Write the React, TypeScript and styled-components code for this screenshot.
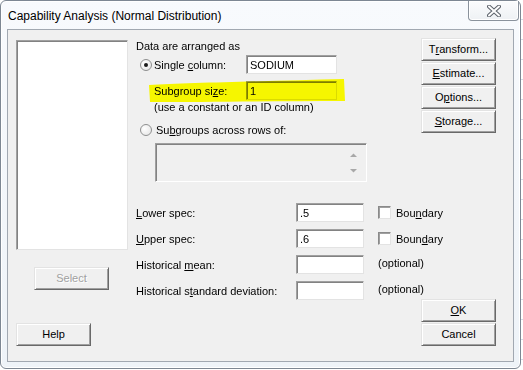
import styled, { createGlobalStyle } from "styled-components";

const GlobalStyle = createGlobalStyle`
  html, body {
    margin: 0;
    padding: 0;
  }
  body {
    width: 523px;
    height: 370px;
    overflow: hidden;
    background: #ffffff;
    background-image: repeating-linear-gradient(
      to bottom,
      transparent 0,
      transparent 19px,
      #d4dbe6 19px,
      #d4dbe6 20px
    );
    font-family: "Liberation Sans", Arial, sans-serif;
  }
`;

const Window = styled.div`
  position: relative;
  width: 519px;
  height: 367px;
  border: 1px solid #7d8793;
  border-radius: 6px;
  background: linear-gradient(180deg, #f8fafd 0%, #eef3f8 100%);
  box-shadow: inset 0 0 0 1px #ffffff;
  display: flex;
  flex-direction: column;
`;

const TitleBar = styled.div`
  height: 28px;
  display: flex;
  justify-content: space-between;
  align-items: flex-start;
  padding-left: 7px;
`;

const Title = styled.div`
  font-size: 12px;
  line-height: 30px;
  color: #000;
  text-shadow: 0 0 6px #ffffff;
`;

const CloseButton = styled.div`
  width: 49px;
  height: 19px;
  margin-right: 1px;
  border: 1px solid #8a929c;
  border-top: none;
  border-radius: 0 0 4px 4px;
  background: linear-gradient(180deg, #fbfcfd 0%, #eef1f4 100%);
  box-shadow: inset 0 0 0 1px #ffffff;
  display: flex;
  align-items: center;
  justify-content: center;
`;

const Client = styled.div`
  position: relative;
  margin: 0 6px;
  height: 331px;
  border: 1px solid #a1a8b1;
  background: #f0f0f0;
  display: flex;
  padding: 0 16px 0 8px;
  font-size: 11px;
  color: #000;
`;

const LeftColumn = styled.div`
  width: 112px;
  flex-shrink: 0;
  margin-right: 8px;
  display: flex;
  flex-direction: column;
`;

const ListBox = styled.div`
  margin-top: 10px;
  width: 110px;
  height: 208px;
  background: #ffffff;
  border: 1px solid;
  border-color: #a0a0a0 #e3e3e3 #e3e3e3 #a0a0a0;
  box-shadow: inset 1px 1px 0 #828282;
`;

const Button = styled.div<{ $disabled?: boolean; $top?: number; $left?: number }>`
  box-sizing: border-box;
  flex-shrink: 0;
  width: 75px;
  height: 23px;
  margin-top: ${(p) => p.$top ?? 1}px;
  margin-left: ${(p) => p.$left ?? 0}px;
  border: 1px solid;
  border-color: #e3e3e3 #696969 #696969 #e3e3e3;
  box-shadow: inset 1px 1px 0 #ffffff, inset -1px -1px 0 #a0a0a0;
  background: #f0f0f0;
  display: flex;
  align-items: center;
  justify-content: center;
  padding-bottom: 1px;
  color: ${(p) => (p.$disabled ? "#a0a0a0" : "#000")};
  text-shadow: ${(p) => (p.$disabled ? "1px 1px 0 #ffffff" : "none")};
`;

const MiddleColumn = styled.div`
  width: 285px;
  flex-shrink: 0;
  display: flex;
  flex-direction: column;
  position: relative;
  z-index: 1;
`;

const Heading = styled.div`
  margin-top: 10px;
  height: 13px;
  line-height: 13px;
`;

const OptionRow = styled.div<{ $top: number }>`
  position: relative;
  margin-top: ${(p) => p.$top}px;
  height: 19px;
  display: flex;
  align-items: center;
`;

const Radio = styled.span<{ $checked?: boolean }>`
  box-sizing: border-box;
  flex-shrink: 0;
  width: 12px;
  height: 12px;
  margin: 0 2px 0 4px;
  border-radius: 50%;
  border: 1px solid #8e8f8f;
  background: radial-gradient(circle at 35% 35%, #ffffff 0%, #e2e2e2 100%);
  display: flex;
  align-items: center;
  justify-content: center;
  &::after {
    content: "";
    display: ${(p) => (p.$checked ? "block" : "none")};
    width: 4px;
    height: 4px;
    border-radius: 50%;
    background: #1a1a1a;
  }
`;

const Label = styled.span<{ $width?: number; $indent?: number }>`
  display: inline-block;
  flex-shrink: 0;
  width: ${(p) => (p.$width ? `${p.$width}px` : "auto")};
  margin-left: ${(p) => p.$indent ?? 0}px;
  white-space: nowrap;
`;

const TextBox = styled.div<{ $width: number }>`
  box-sizing: border-box;
  flex-shrink: 0;
  width: ${(p) => p.$width}px;
  height: 19px;
  padding: 0 3px;
  background: #ffffff;
  border: 1px solid;
  border-color: #a0a0a0 #e3e3e3 #e3e3e3 #a0a0a0;
  box-shadow: inset 1px 1px 0 #828282;
  line-height: 18px;
`;

const Note = styled.div`
  margin-top: 1px;
  margin-left: 18px;
  height: 13px;
  line-height: 13px;
`;

const SelectArea = styled.div`
  box-sizing: border-box;
  margin: 4px 0 0 19px;
  width: 212px;
  height: 39px;
  border: 1px solid;
  border-color: #a0a0a0 #ffffff #ffffff #a0a0a0;
  box-shadow: inset 1px 1px 0 #828282;
  background: #f0f0f0;
  display: flex;
  justify-content: flex-end;
  padding: 8px 8px 0 0;
`;

const SpecList = styled.div`
  margin-top: 21px;
  display: flex;
  flex-direction: column;
  gap: 7px;
`;

const SpecRow = styled.div`
  height: 19px;
  display: flex;
  align-items: center;
  white-space: nowrap;
`;

const CheckBox = styled.span`
  box-sizing: border-box;
  flex-shrink: 0;
  width: 13px;
  height: 13px;
  margin: 0 5px 0 14px;
  background: #ffffff;
  border: 1px solid;
  border-color: #8a8a8a #e3e3e3 #e3e3e3 #8a8a8a;
  box-shadow: inset 1px 1px 0 #a0a0a0;
`;

const Aside = styled.span`
  flex-shrink: 0;
  margin-left: 14px;
  margin-top: -3px;
`;

const RightColumn = styled.div`
  width: 75px;
  flex-shrink: 0;
  display: flex;
  flex-direction: column;
  padding-bottom: 15px;
`;

const Spacer = styled.div`
  flex: 1;
`;

const Key = styled.span`
  text-decoration: underline;
  text-underline-offset: 1px;
`;

const Highlight = styled.svg`
  position: absolute;
  left: 12px;
  top: -4px;
  width: 198px;
  height: 26px;
  mix-blend-mode: multiply;
  pointer-events: none;
`;

const CloseGlyph = () => (
  <svg width="14" height="12" viewBox="0 0 14 12">
    <path d="M2 1.5 L12 10.5 M12 1.5 L2 10.5" stroke="#5b6169" strokeWidth="4" strokeLinecap="round" />
    <path d="M2 1.5 L12 10.5 M12 1.5 L2 10.5" stroke="#fdfdfd" strokeWidth="2" strokeLinecap="round" />
  </svg>
);

const SpinArrows = () => (
  <svg width="9" height="22" viewBox="0 0 9 22">
    <path d="M1 5 L4.5 1.5 L8 5 Z" fill="#a8a8a8" />
    <path d="M1 17 L4.5 20.5 L8 17 Z" fill="#a8a8a8" />
  </svg>
);

const App = () => {
  return (
    <>
      <GlobalStyle />
      <Window>
        <TitleBar>
          <Title>Capability Analysis (Normal Distribution)</Title>
          <CloseButton>
            <CloseGlyph />
          </CloseButton>
        </TitleBar>
        <Client>
          <LeftColumn>
            <ListBox />
            <Button $disabled $top={17} $left={18}>
              Select
            </Button>
            <Spacer />
            <Button $top={0}>Help</Button>
            <div style={{ height: 15 }} />
          </LeftColumn>

          <MiddleColumn>
            <Heading>Data are arranged as</Heading>
            <OptionRow $top={2}>
              <Radio $checked />
              <Label $width={92}>
                Single <Key>c</Key>olumn:
              </Label>
              <TextBox $width={91}>SODIUM</TextBox>
            </OptionRow>
            <OptionRow $top={7}>
              <Label $width={92} $indent={18}>
                Subgroup si<Key>z</Key>e:
              </Label>
              <TextBox $width={91}>1</TextBox>
              <Highlight viewBox="0 0 198 26" preserveAspectRatio="none">
                <path
                  d="M1 8 C40 6 120 4 196 2 L197 24 C130 24 60 25 2 25 Z"
                  fill="#f6f600"
                />
              </Highlight>
            </OptionRow>
            <Note>(use a constant or an ID column)</Note>
            <OptionRow $top={6}>
              <Radio />
              <Label $indent={2}>
                Su<Key>b</Key>groups across rows of:
              </Label>
            </OptionRow>
            <SelectArea>
              <SpinArrows />
            </SelectArea>
            <SpecList>
              <SpecRow>
                <Label $width={160}>
                  <Key>L</Key>ower spec:
                </Label>
                <TextBox $width={68}>.5</TextBox>
                <CheckBox />
                <span>
                  Bou<Key>n</Key>dary
                </span>
              </SpecRow>
              <SpecRow>
                <Label $width={160}>
                  <Key>U</Key>pper spec:
                </Label>
                <TextBox $width={68}>.6</TextBox>
                <CheckBox />
                <span>
                  Boun<Key>d</Key>ary
                </span>
              </SpecRow>
              <SpecRow>
                <Label $width={160}>
                  Historical <Key>m</Key>ean:
                </Label>
                <TextBox $width={68} />
                <Aside>(optional)</Aside>
              </SpecRow>
              <SpecRow>
                <Label $width={160}>
                  Historical s<Key>t</Key>andard deviation:
                </Label>
                <TextBox $width={68} />
                <Aside>(optional)</Aside>
              </SpecRow>
            </SpecList>
          </MiddleColumn>

          <RightColumn>
            <Button $top={8}>
              T<Key>r</Key>ansform...
            </Button>
            <Button>
              <Key>E</Key>stimate...
            </Button>
            <Button>
              O<Key>p</Key>tions...
            </Button>
            <Button>
              <Key>S</Key>torage...
            </Button>
            <Spacer />
            <Button $top={0}>
              <Key>O</Key>K
            </Button>
            <Button>Cancel</Button>
          </RightColumn>
        </Client>
      </Window>
    </>
  );
};

export default App;
